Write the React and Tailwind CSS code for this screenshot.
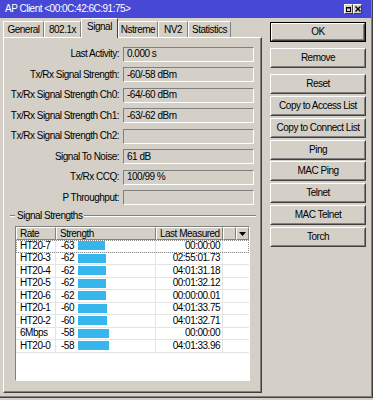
import React from "react";

const rows = [
  ["HT20-7", "-63", 27, "00:00:00"],
  ["HT20-3", "-62", 28, "02:55:01.73"],
  ["HT20-4", "-62", 28, "04:01:31.18"],
  ["HT20-5", "-62", 28, "00:01:32.12"],
  ["HT20-6", "-62", 28, "00:00:00.01"],
  ["HT20-1", "-60", 29, "04:01:33.75"],
  ["HT20-2", "-60", 29, "04:01:32.71"],
  ["6Mbps", "-58", 31, "00:00:00"],
  ["HT20-0", "-58", 31, "04:01:33.96"],
];

const fields = [
  ["Last Activity:", "0.000 s"],
  ["Tx/Rx Signal Strength:", "-60/-58 dBm"],
  ["Tx/Rx Signal Strength Ch0:", "-64/-60 dBm"],
  ["Tx/Rx Signal Strength Ch1:", "-63/-62 dBm"],
  ["Tx/Rx Signal Strength Ch2:", ""],
  ["Signal To Noise:", "61 dB"],
  ["Tx/Rx CCQ:", "100/99 %"],
  ["P Throughput:", ""],
];

function Field({ label, value }) {
  return (
    <div className="flex items-center h-[16px]">
      <div className="w-[115px] text-right whitespace-nowrap">{label}</div>
      <div className="ml-[4px] w-[131px] h-[15px] border border-t-[#808080] border-l-[#808080] border-b-white border-r-white flex items-center pl-[3px] whitespace-nowrap">
        {value}
      </div>
    </div>
  );
}

function Btn({ children, def }) {
  return (
    <div className={def ? "h-[20px] border border-black" : "h-[20px]"}>
      <div className="h-full border border-t-white border-l-white border-r-[#404040] border-b-[#404040]">
        <div className="h-full border border-t-[#d4d0c8] border-l-[#d4d0c8] border-r-[#808080] border-b-[#808080] flex items-center justify-center whitespace-nowrap">
          {children}
        </div>
      </div>
    </div>
  );
}

function Tab({ label, w, sel }) {
  if (sel) {
    return (
      <div
        className={`${w} h-[20px] -mb-px relative z-10 bg-[#d4d0c8] border-t border-l border-t-white border-l-white border-r border-r-[#404040] flex items-start justify-center pt-[3px]`}
      >
        {label}
      </div>
    );
  }
  return (
    <div
      className={`${w} h-[16px] border-t border-l border-t-white border-l-white border-r border-r-[#808080] flex items-center justify-center`}
    >
      {label}
    </div>
  );
}

function TitleBox({ children }) {
  return (
    <div className="w-[9px] h-[10px] bg-[#d4d0c8] border border-t-white border-l-white border-r-[#404040] border-b-[#404040] flex items-center justify-center">
      {children}
    </div>
  );
}

export default function App() {
  return (
    <div className="w-[373px] h-[400px] bg-[#d4d0c8] font-['Liberation_Sans',Arial,sans-serif] text-[10px] tracking-[-0.5px] text-black leading-none">
      <div className="w-[373px] h-[398px] border-r border-b border-r-[#404040] border-b-[#404040]">
        <div className="h-full border-r border-b border-r-[#808080] border-b-[#808080] flex flex-col">
          {/* title bar */}
          <div className="h-[18px] bg-[#4848d6] flex items-center pl-[5px] pr-[9px]">
            <span className="text-white">AP Client &lt;00:0C:42:6C:91:75&gt;</span>
            <div className="ml-auto flex items-center">
              <TitleBox>
                <svg width="5" height="5" viewBox="0 0 5 5">
                  <rect x="0.5" y="0.5" width="4" height="4" fill="none" stroke="#000" />
                  <rect x="0" y="0" width="5" height="1.5" fill="#000" />
                </svg>
              </TitleBox>
              <TitleBox>
                <svg width="6" height="6" viewBox="0 0 6 6">
                  <path d="M0.5 0.5 L5.5 5.5 M5.5 0.5 L0.5 5.5" stroke="#000" strokeWidth="1.4" />
                </svg>
              </TitleBox>
            </div>
          </div>

          <div className="flex flex-1">
            {/* left column */}
            <div className="ml-[3px] w-[259px] flex flex-col">
              <div className="h-[19px] flex items-end">
                <Tab label="General" w="w-[41px]" />
                <Tab label="802.1x" w="w-[37px]" />
                <Tab label="Signal" w="w-[37px]" sel />
                <Tab label="Nstreme" w="w-[40px]" />
                <Tab label="NV2" w="w-[30px]" />
                <Tab label="Statistics" w="w-[43px]" />
              </div>
              <div className="h-[356px] border border-t-white border-l-white border-r-[#404040] border-b-[#404040]">
                <div className="h-full border-r border-b border-r-[#808080] border-b-[#808080] flex flex-col pt-[8px]">
                  <div className="flex flex-col gap-[4.5px]">
                    {fields.map(([l, v]) => (
                      <Field key={l} label={l} value={v} />
                    ))}
                  </div>

                  {/* group title */}
                  <div className="mt-[4.5px] h-[12px] flex items-center pl-[6px] pr-[4px]">
                    <div className="w-[5px] h-[2px] border-t border-b border-t-[#808080] border-b-white" />
                    <span className="px-[2px] whitespace-nowrap">Signal Strengths</span>
                    <div className="flex-1 h-[2px] border-t border-b border-t-[#808080] border-b-white" />
                  </div>

                  {/* table */}
                  <div className="mt-[4px] ml-[11px] w-[235px] h-[155px] border border-t-[#808080] border-l-[#808080] border-r-white border-b-white bg-white flex flex-col">
                    <div className="h-[13px] flex bg-[#d4d0c8]">
                      {[
                        ["Rate", "w-[40px]"],
                        ["Strength", "w-[100px]"],
                        ["Last Measured", "w-[67px]"],
                        ["", "w-[13px]"],
                      ].map(([t, w], i) => (
                        <div
                          key={i}
                          className={`${w} h-full border border-t-white border-l-white border-r-[#808080] border-b-[#808080] flex items-center pl-[3px] whitespace-nowrap`}
                        >
                          {t}
                        </div>
                      ))}
                      <div className="flex-1 h-full border border-t-white border-l-white border-r-[#808080] border-b-[#808080] flex items-center justify-center">
                        <svg width="7" height="4" viewBox="0 0 7 4">
                          <path d="M0 0 L7 0 L3.5 4 Z" fill="#000" />
                        </svg>
                      </div>
                    </div>
                    {rows.map(([r, s, bw, t], i) => (
                      <div
                        key={r}
                        className={`h-[12.5px] flex border-b border-b-[#e4e4e4] ${
                          i === 0 ? "outline outline-1 outline-dotted outline-[#909090] -outline-offset-1" : ""
                        }`}
                      >
                        <div className="w-[40px] border-r border-r-[#e4e4e4] flex items-center pl-[4px]">{r}</div>
                        <div className="w-[100px] border-r border-r-[#e4e4e4] flex items-center pl-[5px]">
                          <span className="w-[17px]">{s}</span>
                          <div className="h-[9px] bg-[#36b6ec]" style={{ width: bw }} />
                        </div>
                        <div className="w-[67px] border-r border-r-[#e4e4e4] flex items-center justify-end pr-[2px]">{t}</div>
                        <div className="flex-1" />
                      </div>
                    ))}
                  </div>
                </div>
              </div>
            </div>

            {/* right column */}
            <div className="ml-[8px] w-[96px] pt-[4px] flex flex-col">
              <Btn def>OK</Btn>
              <div className="mt-[6px]">
                <Btn>Remove</Btn>
              </div>
              <div className="mt-[6px] flex flex-col gap-[1.85px]">
                <Btn>Reset</Btn>
                <Btn>Copy to Access List</Btn>
                <Btn>Copy to Connect List</Btn>
                <Btn>Ping</Btn>
                <Btn>MAC Ping</Btn>
                <Btn>Telnet</Btn>
                <Btn>MAC Telnet</Btn>
                <Btn>Torch</Btn>
              </div>
            </div>
          </div>
        </div>
      </div>
    </div>
  );
}
